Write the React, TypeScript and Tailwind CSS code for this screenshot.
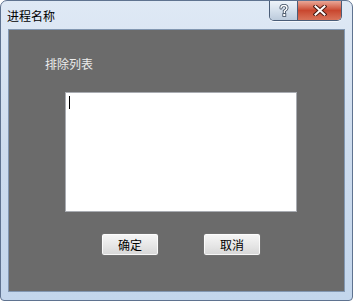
import React from "react";

const FONT = { fontFamily: '"Noto Sans CJK SC", "Noto Sans", sans-serif' };

// title bar buttons (help + close), Win7 style
function CaptionButtons() {
  return (
    <div className="flex h-[20px] rounded-b-[5px] border border-t-0 border-[#4a5d78] overflow-hidden shadow-[0_1px_0_rgba(255,255,255,0.7)]">
      <div className="w-[28px] h-full flex items-center justify-center bg-gradient-to-b from-[#eef3f9] via-[#d5e0ec] to-[#bccbdc] border-r border-[#4a5d78]">
        <svg width="10" height="13" viewBox="0 0 10 13">
          <path
            d="M2 4 Q2 1.5 5 1.5 Q8 1.5 8 4 Q8 5.5 6 6.5 L5.3 7 L5.3 8.5"
            fill="none"
            stroke="#3b4a5e"
            strokeWidth="3"
            strokeLinecap="round"
          />
          <path
            d="M2 4 Q2 1.5 5 1.5 Q8 1.5 8 4 Q8 5.5 6 6.5 L5.3 7 L5.3 8.5"
            fill="none"
            stroke="#ffffff"
            strokeWidth="1.4"
            strokeLinecap="round"
          />
          <rect x="3.8" y="9.6" width="3" height="2.8" fill="#ffffff" stroke="#3b4a5e" strokeWidth="0.8" />
        </svg>
      </div>
      <div className="w-[43px] h-full flex items-center justify-center bg-gradient-to-b from-[#e9a797] via-[#c9472f] to-[#d9735a]">
        <svg width="14" height="11" viewBox="0 0 14 11">
          <path d="M2.5 1.5 L11.5 9.5 M11.5 1.5 L2.5 9.5" stroke="#4a1a12" strokeWidth="4" strokeLinecap="square" />
          <path d="M2.5 1.5 L11.5 9.5 M11.5 1.5 L2.5 9.5" stroke="#ffffff" strokeWidth="2" strokeLinecap="square" />
        </svg>
      </div>
    </div>
  );
}

function PushButton({ label }: { label: string }) {
  return (
    <div className="w-[58px] h-[23px] flex items-center justify-center rounded-[3px] border border-[#707070] bg-gradient-to-b from-[#f6f6f6] via-[#e8e8e8] to-[#d6d6d6] text-[12px] text-black shadow-[inset_0_0_0_1px_rgba(255,255,255,0.8)]">
      {label}
    </div>
  );
}

export default function App() {
  return (
    <div className="w-[353px] h-[301px] bg-white" style={FONT}>
      {/* window frame */}
      <div className="w-full h-full flex flex-col rounded-t-[7px] rounded-b-[4px] border border-[#5f7390] bg-gradient-to-b from-[#dfe9f5] via-[#cddcee] to-[#c3d6ec] overflow-hidden">
        {/* title bar */}
        <div className="h-[28px] flex items-start justify-between">
          <div className="pl-[6px] pt-[7px] text-[12px] leading-[16px] text-black">进程名称</div>
          <div className="mr-[10px]">
            <CaptionButtons />
          </div>
        </div>

        {/* client area */}
        <div className="mx-[7px] h-[263px] bg-[#6b6b6b] border border-[#8297b1] flex flex-col">
          <div className="mt-[26px] ml-[36px] h-[16px] leading-[16px] text-[12px] text-[#ececec]">排除列表</div>
          <div className="mt-[20px] ml-[56px] w-[232px] h-[120px] bg-white border border-[#a9acb2] relative">
            <div className="absolute left-[3px] top-[3px] w-[1px] h-[13px] bg-black" />
          </div>
          <div className="mt-[21px] ml-[92px] flex gap-[44px]">
            <PushButton label="确定" />
            <PushButton label="取消" />
          </div>
        </div>
      </div>
    </div>
  );
}
